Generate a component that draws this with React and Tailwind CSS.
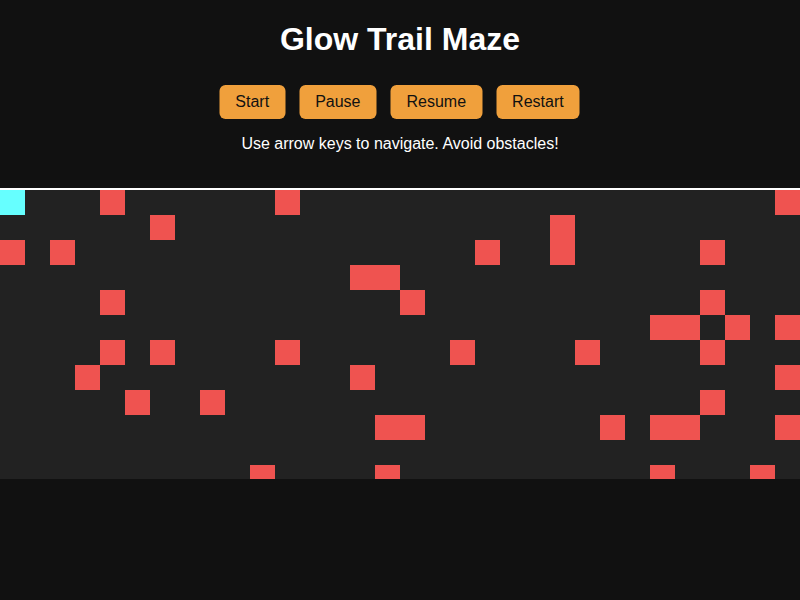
import React from "react";

const COLS = 32;
const ROWS = 12;
const obstacles = {
  0: [4, 11, 31],
  1: [6, 22],
  2: [0, 2, 19, 22, 28],
  3: [14, 15],
  4: [4, 16, 28],
  5: [26, 27, 29, 31],
  6: [4, 6, 11, 18, 23, 28],
  7: [3, 14, 31],
  8: [5, 8, 28],
  9: [15, 16, 24, 26, 27, 31],
  10: [],
  11: [10, 15, 26, 30],
};

export default function App() {
  const cells = [];
  for (let r = 0; r < ROWS; r++) {
    for (let c = 0; c < COLS; c++) {
      const isPlayer = r === 0 && c === 0;
      const isObs = obstacles[r].includes(c);
      cells.push(
        <div
          key={`${r}-${c}`}
          className={
            isPlayer
              ? "w-[25px] h-[25px] bg-[#66ffff]"
              : isObs
              ? "w-[25px] h-[25px] bg-[#ef5350]"
              : "w-[25px] h-[25px]"
          }
        />
      );
    }
  }

  return (
    <div
      className="w-[800px] h-[600px] bg-[#111111] text-white flex flex-col items-center pt-[21px]"
      style={{ fontFamily: '"Liberation Sans", Arial, sans-serif' }}
    >
      <h1 className="text-[32px] font-bold leading-[37px]">Glow Trail Maze</h1>
      <div className="flex gap-[14px] mt-[27px] -translate-x-[0.5px]">
        {["Start", "Pause", "Resume", "Restart"].map((t) => (
          <button
            key={t}
            className="h-[34px] px-4 rounded-[6px] bg-[#f0a03c] text-[#111111] text-[16px] leading-[18px]"
          >
            {t}
          </button>
        ))}
      </div>
      <p className="mt-[16px] text-[16px] leading-[18px]">
        Use arrow keys to navigate. Avoid obstacles!
      </p>
      <div className="mt-[35px] w-full border-t-2 border-white h-[291px] overflow-hidden">
        <div className="grid grid-cols-[repeat(32,25px)] bg-[#222222]">{cells}</div>
      </div>
    </div>
  );
}
